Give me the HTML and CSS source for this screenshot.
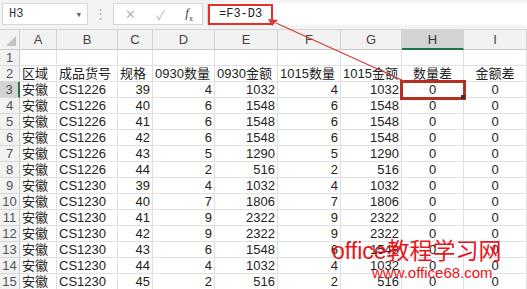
FILE: index.html
```html
<!DOCTYPE html>
<html lang="zh-CN">
<head>
    <meta charset="UTF-8">
    <title>Sheet</title>
    <link rel="stylesheet" href="styles.css">
</head>
<body>
<div class="formula-bar">
    <div class="name-box"><span>H3</span><span class="drop">&#9662;</span></div>
    <div class="grip">&#8942;</div>
    <div class="fx-box">
        <span class="cancel">&#10005;</span>
        <span class="enter">&#10003;</span>
        <span class="fx"><i>f</i><sub>x</sub></span>
    </div>
    <div class="formula-input"><span class="formula">=F3-D3</span></div>
</div>

<div class="grid">
    <div class="hd corner"><span class="tri"></span></div>
    <div class="hd">A</div><div class="hd">B</div><div class="hd">C</div><div class="hd">D</div>
    <div class="hd">E</div><div class="hd">F</div><div class="hd">G</div><div class="hd sel">H</div><div class="hd">I</div>

    <div class="rh">1</div>
    <div class="c"></div><div class="c"></div><div class="c"></div><div class="c"></div>
    <div class="c"></div><div class="c"></div><div class="c"></div><div class="c"></div><div class="c"></div>

    <div class="rh">2</div>
    <div class="c">区域</div><div class="c">成品货号</div><div class="c">规格</div><div class="c">0930数量</div>
    <div class="c">0930金额</div><div class="c">1015数量</div><div class="c">1015金额</div><div class="c m">数量差</div><div class="c m">金额差</div>

    <div class="rh sel">3</div>
    <div class="c">安徽</div><div class="c">CS1226</div><div class="c n">39</div><div class="c n">4</div>
    <div class="c n">1032</div><div class="c n">4</div><div class="c n">1032</div><div class="c m active">0</div><div class="c m">0</div>

    <div class="rh">4</div>
    <div class="c">安徽</div><div class="c">CS1226</div><div class="c n">40</div><div class="c n">6</div>
    <div class="c n">1548</div><div class="c n">6</div><div class="c n">1548</div><div class="c m">0</div><div class="c m">0</div>

    <div class="rh">5</div>
    <div class="c">安徽</div><div class="c">CS1226</div><div class="c n">41</div><div class="c n">6</div>
    <div class="c n">1548</div><div class="c n">6</div><div class="c n">1548</div><div class="c m">0</div><div class="c m">0</div>

    <div class="rh">6</div>
    <div class="c">安徽</div><div class="c">CS1226</div><div class="c n">42</div><div class="c n">6</div>
    <div class="c n">1548</div><div class="c n">6</div><div class="c n">1548</div><div class="c m">0</div><div class="c m">0</div>

    <div class="rh">7</div>
    <div class="c">安徽</div><div class="c">CS1226</div><div class="c n">43</div><div class="c n">5</div>
    <div class="c n">1290</div><div class="c n">5</div><div class="c n">1290</div><div class="c m">0</div><div class="c m">0</div>

    <div class="rh">8</div>
    <div class="c">安徽</div><div class="c">CS1226</div><div class="c n">44</div><div class="c n">2</div>
    <div class="c n">516</div><div class="c n">2</div><div class="c n">516</div><div class="c m">0</div><div class="c m">0</div>

    <div class="rh">9</div>
    <div class="c">安徽</div><div class="c">CS1230</div><div class="c n">39</div><div class="c n">4</div>
    <div class="c n">1032</div><div class="c n">4</div><div class="c n">1032</div><div class="c m">0</div><div class="c m">0</div>

    <div class="rh">10</div>
    <div class="c">安徽</div><div class="c">CS1230</div><div class="c n">40</div><div class="c n">7</div>
    <div class="c n">1806</div><div class="c n">7</div><div class="c n">1806</div><div class="c m">0</div><div class="c m">0</div>

    <div class="rh">11</div>
    <div class="c">安徽</div><div class="c">CS1230</div><div class="c n">41</div><div class="c n">9</div>
    <div class="c n">2322</div><div class="c n">9</div><div class="c n">2322</div><div class="c m">0</div><div class="c m">0</div>

    <div class="rh">12</div>
    <div class="c">安徽</div><div class="c">CS1230</div><div class="c n">42</div><div class="c n">9</div>
    <div class="c n">2322</div><div class="c n">9</div><div class="c n">2322</div><div class="c m">0</div><div class="c m">0</div>

    <div class="rh">13</div>
    <div class="c">安徽</div><div class="c">CS1230</div><div class="c n">43</div><div class="c n">6</div>
    <div class="c n">1548</div><div class="c n">6</div><div class="c n">1548</div><div class="c m">0</div><div class="c m">0</div>

    <div class="rh">14</div>
    <div class="c">安徽</div><div class="c">CS1230</div><div class="c n">44</div><div class="c n">4</div>
    <div class="c n">1032</div><div class="c n">4</div><div class="c n">1032</div><div class="c m">0</div><div class="c m">0</div>

    <div class="rh">15</div>
    <div class="c">安徽</div><div class="c">CS1230</div><div class="c n">45</div><div class="c n">2</div>
    <div class="c n">516</div><div class="c n">2</div><div class="c n">516</div><div class="c m">0</div><div class="c m">0</div>
</div>

<!-- annotation drawn over the sheet -->
<svg class="arrow" width="527" height="289" viewBox="0 0 527 289">
    <line x1="404" y1="81" x2="276" y2="23" stroke="#d8393a" stroke-width="1.2"/>
    <polygon points="268,19 278,20 272,26" fill="#d8393a"/>
</svg>

<div class="watermark">
    <div class="wm-title">office教程学习网</div>
    <div class="wm-url">www.office68.com</div>
</div>
</body>
</html>
```

FILE: styles.css
```css
body {
    margin: 0;
    width: 527px;
    height: 289px;
    overflow: hidden;
    background: #fff;
    position: relative;
    font-family: "Liberation Sans", "Noto Sans CJK SC", sans-serif;
    color: #222;
}

/* formula bar */
.formula-bar {
    display: flex;
    align-items: flex-start;
    height: 30px;
    box-sizing: border-box;
    padding: 3px 0 0 2px;
    background: #f3f3f3;
    border-bottom: 1px solid #d4d4d4;
}

.name-box {
    width: 86px;
    height: 22px;
    box-sizing: border-box;
    border: 1px solid #d6d6d6;
    background: #fff;
    display: flex;
    align-items: center;
    justify-content: space-between;
    padding: 0 5px 0 6px;
    font: 12px "Liberation Mono", monospace;
    color: #333;
}

.drop {
    font-size: 11px;
    color: #666;
}

.grip {
    width: 25px;
    text-align: center;
    color: #b0b0b0;
    font-size: 13px;
    line-height: 22px;
}

.fx-box {
    width: 90px;
    height: 22px;
    box-sizing: border-box;
    border: 1px solid #d6d6d6;
    background: #fff;
    display: flex;
    align-items: center;
    justify-content: space-between;
    padding: 0 9px 0 11px;
    color: #b5b5b5;
    font-size: 13px;
}

.fx {
    color: #444;
    font-family: "Liberation Serif", serif;
    font-size: 13px;
}

.fx sub {
    font-size: 8px;
}

.formula-input {
    flex: 1;
    margin-left: 4px;
    height: 22px;
    background: #fff;
    border-left: 1px solid #d6d6d6;
}

.formula {
    display: inline-block;
    width: 65px;
    height: 21px;
    box-sizing: border-box;
    border: 2px solid #e2302c;
    padding-left: 9px;
    line-height: 17px;
    font: 12px/17px "Liberation Mono", monospace;
    color: #222;
}

/* sheet grid */
.grid {
    display: grid;
    grid-template-columns: 20px 37px 61px 35px 62px 63px 63px 61px 62px 63px;
    grid-template-rows: 20px;
    grid-auto-rows: 16px;
    font-size: 13px;
}

.grid > div {
    box-sizing: border-box;
    white-space: nowrap;
}

.hd {
    background: #f2f2f2;
    border-right: 1px solid #d4d4d4;
    border-bottom: 1px solid #c8c8c8;
    text-align: center;
    line-height: 19px;
    color: #444;
}

.hd.sel {
    background: #d3d3d3;
    border-bottom: 2px solid #217346;
    color: #333;
}

.corner {
    position: relative;
}

.tri {
    position: absolute;
    right: 3px;
    bottom: 3px;
    width: 0;
    height: 0;
    border-left: 10px solid transparent;
    border-bottom: 10px solid #c4c4c4;
}

.rh {
    background: #f2f2f2;
    border-right: 1px solid #c8c8c8;
    border-bottom: 1px solid #d8d8d8;
    text-align: center;
    line-height: 16px;
    color: #555;
}

.rh.sel {
    background: #d3d3d3;
    border-right: 2px solid #217346;
}

.c {
    border-right: 1px solid #e0e0e0;
    border-bottom: 1px solid #e0e0e0;
    padding: 0 2px;
    line-height: 16px;
    overflow: visible;
}

.n {
    text-align: right;
}

.m {
    text-align: center;
}

.active {
    position: relative;
    outline: 3px solid #b5301f;
    outline-offset: -1px;
    z-index: 1;
}

.active::after {
    content: "";
    position: absolute;
    right: -2px;
    bottom: -2px;
    width: 4px;
    height: 4px;
    background: #333;
}

/* overlays */
.arrow {
    position: absolute;
    left: 0;
    top: 0;
    pointer-events: none;
    z-index: 2;
}

.watermark {
    position: absolute;
    left: 332px;
    top: 238px;
    color: #e8141c;
    z-index: 3;
}

.wm-title {
    font-size: 23px;
    line-height: 26px;
}

.wm-url {
    font-size: 15px;
    line-height: 17px;
    padding-left: 40px;
}
```
